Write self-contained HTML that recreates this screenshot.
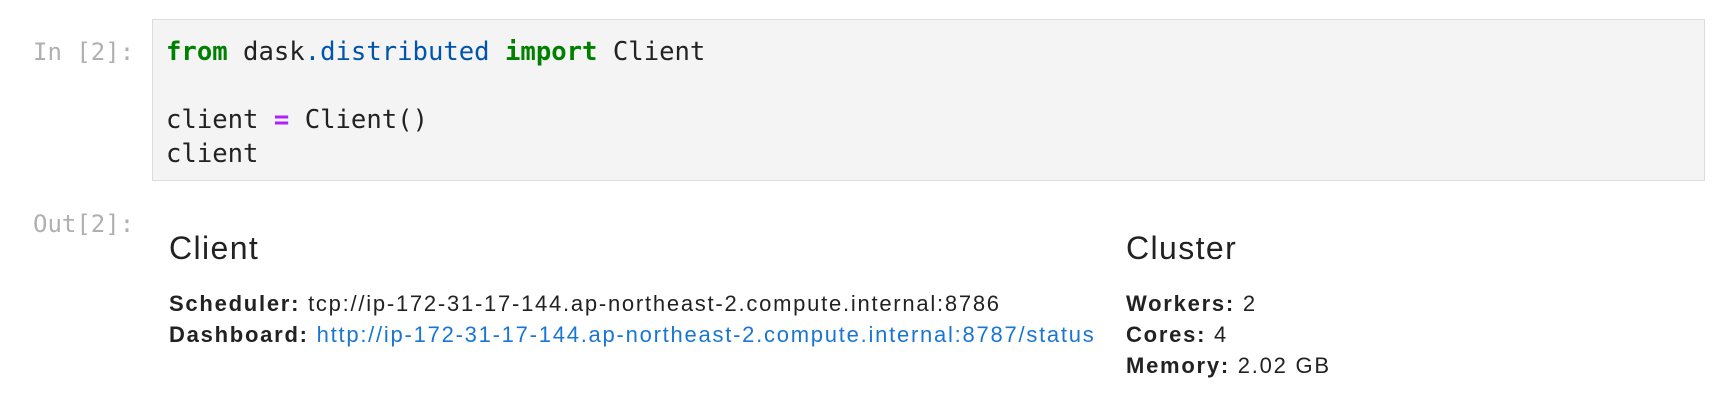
<!DOCTYPE html>
<html><head><style>
body{margin:0;background:#fff;width:1718px;height:420px;position:relative;overflow:hidden;font-family:"Liberation Sans",Arial,sans-serif;color:#222}
.p{position:absolute;font-family:"DejaVu Sans Mono","Liberation Mono",monospace;font-size:24px;color:#b0b0b0;line-height:30px}
.box{position:absolute;left:152px;top:19px;width:1551px;height:160px;background:#f4f4f4;border:1px solid #dcdcdc}
.code{position:absolute;left:166px;top:35px;font-family:"DejaVu Sans Mono","Liberation Mono",monospace;font-size:25.6px;line-height:34px;color:#222;white-space:pre;margin:0}
.k{color:#008000;font-weight:bold}.n{color:#0055aa}.o{color:#aa22ff;font-weight:bold}
h2{position:absolute;margin:0;font-weight:normal;font-size:32px;letter-spacing:1.4px;color:#222;line-height:36px}
.t{position:absolute;font-size:22px;letter-spacing:1.75px;line-height:31px;color:#222}
a{color:#1976d2;text-decoration:none}
</style></head><body>
<div class="p" style="left:33px;top:37px">In [2]:</div>
<div class="box"></div>
<pre class="code"><span class="k">from</span> dask<span class="n">.distributed</span> <span class="k">import</span> Client

client <span class="o">=</span> Client()
client</pre>
<div class="p" style="left:33px;top:209px">Out[2]:</div>
<h2 style="left:169px;top:230px">Client</h2>
<div class="t" style="left:169px;top:288px"><b>Scheduler:</b> tcp://ip-172-31-17-144.ap-northeast-2.compute.internal:8786<br><b>Dashboard:</b> <a>http://ip-172-31-17-144.ap-northeast-2.compute.internal:8787/status</a></div>
<h2 style="left:1126px;top:230px">Cluster</h2>
<div class="t" style="left:1126px;top:288px"><b>Workers:</b> 2<br><b>Cores:</b> 4<br><b>Memory:</b> 2.02 GB</div>
</body></html>
